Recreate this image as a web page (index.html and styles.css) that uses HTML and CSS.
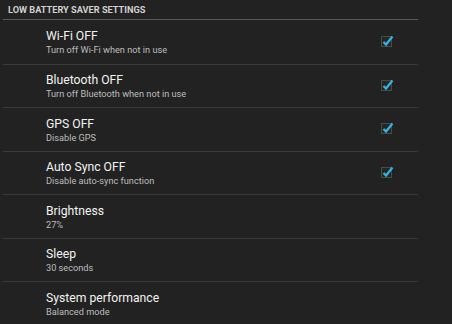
FILE: index.html
```html
<!DOCTYPE html>
<html lang="en">
<head>
    <meta charset="UTF-8">
    <meta name="viewport" content="width=device-width, initial-scale=1.0">
    <title>Low battery saver settings</title>
    <link rel="stylesheet" href="styles.css">
</head>
<body>
 <main>
    <h1 class="section-title">LOW BATTERY SAVER SETTINGS</h1>
    <div class="list">
        <div class="item first">
            <div class="text">
                <h2>Wi-Fi OFF</h2>
                <p>Turn off Wi-Fi when not in use</p>
            </div>
            <svg class="check" width="16" height="16" viewBox="0 0 16 16">
                <rect x="1.5" y="4.5" width="10" height="10" fill="#262626" stroke="#4a4a4a"/>
                <path d="M3.5 10 L6 12.5 L12.5 4.5" fill="none" stroke="#33b5e5" stroke-width="2.2"/>
            </svg>
        </div>
        <div class="item">
            <div class="text">
                <h2>Bluetooth OFF</h2>
                <p>Turn off Bluetooth when not in use</p>
            </div>
            <svg class="check" width="16" height="16" viewBox="0 0 16 16">
                <rect x="1.5" y="4.5" width="10" height="10" fill="#262626" stroke="#4a4a4a"/>
                <path d="M3.5 10 L6 12.5 L12.5 4.5" fill="none" stroke="#33b5e5" stroke-width="2.2"/>
            </svg>
        </div>
        <div class="item">
            <div class="text">
                <h2>GPS OFF</h2>
                <p>Disable GPS</p>
            </div>
            <svg class="check" width="16" height="16" viewBox="0 0 16 16">
                <rect x="1.5" y="4.5" width="10" height="10" fill="#262626" stroke="#4a4a4a"/>
                <path d="M3.5 10 L6 12.5 L12.5 4.5" fill="none" stroke="#33b5e5" stroke-width="2.2"/>
            </svg>
        </div>
        <div class="item">
            <div class="text">
                <h2>Auto Sync OFF</h2>
                <p>Disable auto-sync function</p>
            </div>
            <svg class="check" width="16" height="16" viewBox="0 0 16 16">
                <rect x="1.5" y="4.5" width="10" height="10" fill="#262626" stroke="#4a4a4a"/>
                <path d="M3.5 10 L6 12.5 L12.5 4.5" fill="none" stroke="#33b5e5" stroke-width="2.2"/>
            </svg>
        </div>
        <div class="item">
            <div class="text">
                <h2>Brightness</h2>
                <p>27%</p>
            </div>
        </div>
        <div class="item">
            <div class="text">
                <h2>Sleep</h2>
                <p>30 seconds</p>
            </div>
        </div>
        <div class="item">
            <div class="text">
                <h2>System performance</h2>
                <p>Balanced mode</p>
            </div>
        </div>
    </div>
 </main>
</body>
</html>
```

FILE: styles.css
```css
*{
    margin: 0;
    padding: 0;
    box-sizing: border-box;
    font-family: Roboto, "Liberation Sans", sans-serif;
}
body{
    background-color: #222;
    overflow: hidden;
}
main{
    width: 100%;
    height: 324px;
    background-color: #222;
}
.section-title{
    margin-left: 3px;
    width: 415px;
    height: 20px;
    padding: 4px 0 0 5px;
    font-size: 9.2px;
    line-height: 11px;
    font-weight: bold;
    color: #d0d0d0;
    border-bottom: 1px solid #5a5a5a;
}
.list{
    margin-left: 3px;
    width: 415px;
}
.item{
    display: flex;
    align-items: center;
    justify-content: space-between;
    height: 43.5px;
    padding: 0 22px 0 43px;
    border-bottom: 1px solid #3a3a3a;
}
.item.first{
    height: 44.5px;
}
.text{
    padding-top: 1px;
}
.item h2{
    font-size: 12.2px;
    line-height: 16px;
    font-weight: normal;
    color: #f2f2f2;
}
.item p{
    font-size: 9.2px;
    line-height: 12px;
    color: #bdbdbd;
}
.check{
    display: block;
    margin-top: -4px;
}
```
